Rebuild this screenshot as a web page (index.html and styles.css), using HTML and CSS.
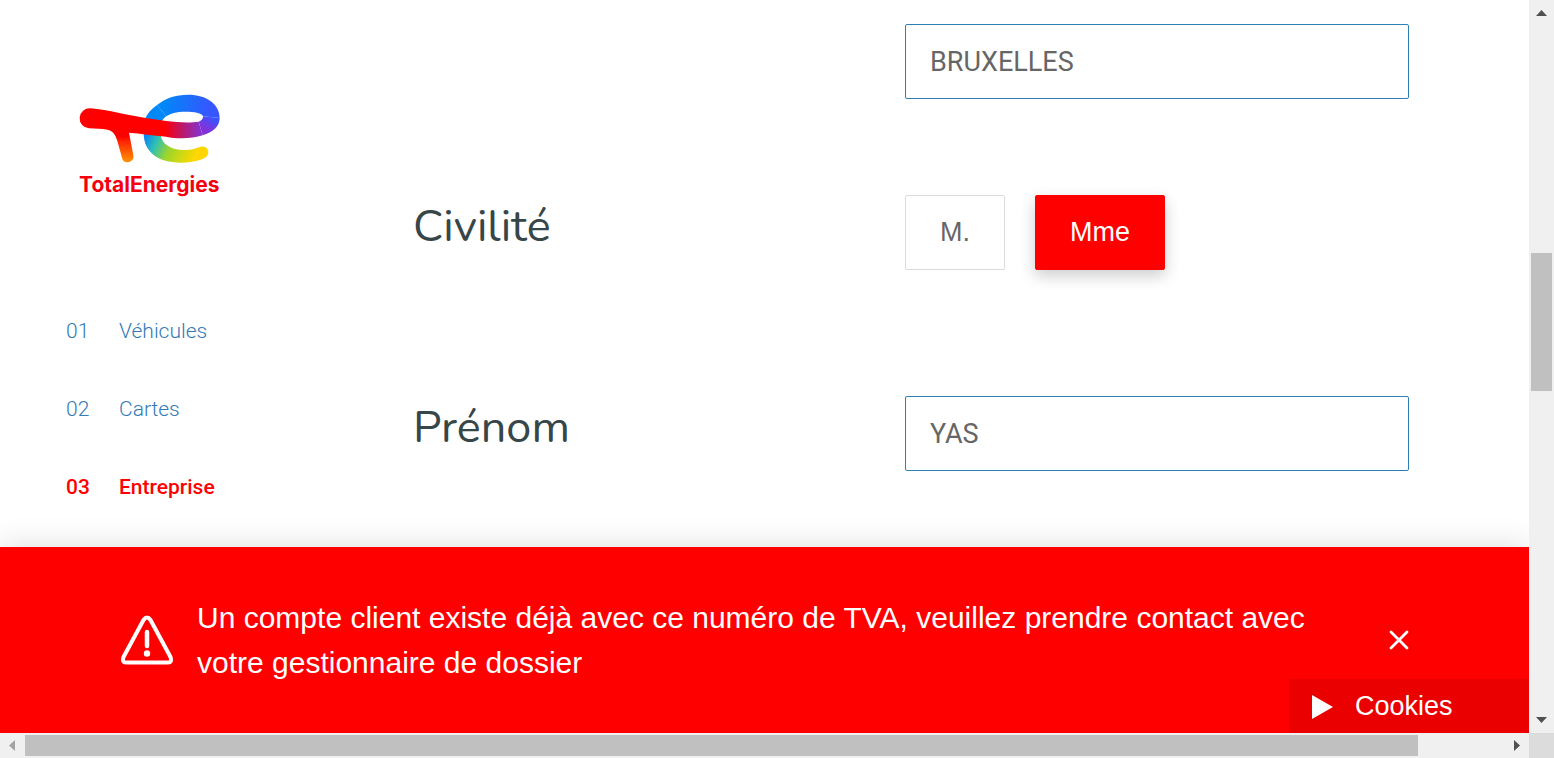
FILE: index.html
```html
<!DOCTYPE html>
<html lang="fr">
<head>
<meta charset="utf-8">
<title>TotalEnergies - Entreprise</title>
<link rel="stylesheet" href="styles.css">
</head>
<body>
<div class="shell">
  <div class="page">
    <div class="content">
      <aside class="sidebar">
        <a class="brand" href="#">
          <svg class="brand-mark" viewBox="60 40 422 210" aria-hidden="true">
            <defs>
              <linearGradient id="t" gradientUnits="userSpaceOnUse" x1="185" y1="168" x2="185" y2="240"><stop offset="0" stop-color="#ff0000"/><stop offset=".15" stop-color="#ff1e00"/><stop offset="1" stop-color="#ff8c00"/></linearGradient>
              <linearGradient id="bar" gradientUnits="userSpaceOnUse" x1="320" y1="0" x2="425" y2="0"><stop offset="0" stop-color="#f5000f"/><stop offset=".5" stop-color="#b81b72"/><stop offset="1" stop-color="#8333d2"/></linearGradient>
              <linearGradient id="side" gradientUnits="userSpaceOnUse" x1="460" y1="110" x2="430" y2="160"><stop offset="0" stop-color="#3656ff"/><stop offset=".6" stop-color="#7a36df"/><stop offset="1" stop-color="#8630d0"/></linearGradient>
              <linearGradient id="top" gradientUnits="userSpaceOnUse" x1="310" y1="70" x2="450" y2="90"><stop offset="0" stop-color="#0088f8"/><stop offset="1" stop-color="#3656ff"/></linearGradient>
              <linearGradient id="low" gradientUnits="userSpaceOnUse" x1="258" y1="165" x2="405" y2="232"><stop offset="0" stop-color="#0a86f0"/><stop offset=".23" stop-color="#2fc0b5"/><stop offset=".5" stop-color="#9bd52b"/><stop offset=".75" stop-color="#cfd914"/><stop offset="1" stop-color="#ffd600"/></linearGradient>
            </defs>
            <path fill="url(#low)" d="M252 158L303 164C307 192 336 208 372 208C396 208 409 202 424 198C435 195 446 203 446 214C446 224 440 230 431 234C410 242 387 246 362 246C298 246 252 216 252 158Z"/>
            <path fill="#0088f8" d="M257 113C264 97 276 84 292 73L320 107C312 112 309 117 306 123Z"/>
            <path fill="url(#top)" d="M292 73C318 52 347 42 386 42C440 42 480 70 480 112L430 107C428 97 402 93 378 93C350 93 331 99 320 107Z"/>
            <path fill="url(#side)" d="M430 107L480 112C480 138 459 155 429 164L417 123C425 120 431 115 430 107Z"/>
            <path fill="url(#bar)" d="M319 121C354 125 390 127 417 123L429 164C398 174 355 175 319 168Z"/>
            <path fill="url(#t)" d="M92 83C148 88 204 104 258 112L320 121V168C280 164 242 159 208 156L221 224C224 236 214 245 203 245C194 245 189 240 187 231L173 181C167 160 159 151 143 147C125 143 108 145 88 143A30 30 0 0 1 92 83Z"/>
          </svg>
          <span class="brand-name">TotalEnergies</span>
        </a>
        <nav class="steps" aria-label="Étapes">
          <a class="step" href="#"><span class="step-number">01</span><span>Véhicules</span></a>
          <a class="step" href="#"><span class="step-number">02</span><span>Cartes</span></a>
          <a class="step step-current" href="#" aria-current="step"><span class="step-number">03</span><span>Entreprise</span></a>
        </nav>
      </aside>
      <form class="form">
        <div class="row">
          <span class="label"></span>
          <input class="field" type="text" aria-label="Ville" value="BRUXELLES">
        </div>
        <div class="row" role="group" aria-labelledby="civility">
          <span class="label" id="civility">Civilité</span>
          <div class="choices">
            <button class="choice" type="button" aria-pressed="false">M.</button>
            <button class="choice choice-on" type="button" aria-pressed="true">Mme</button>
          </div>
        </div>
        <div class="row row-spaced">
          <label class="label" for="firstname">Prénom</label>
          <input class="field" id="firstname" type="text" value="YAS">
        </div>
      </form>
    </div>
    <div class="alert" role="alert">
      <svg class="alert-icon" viewBox="0 0 54 50" aria-hidden="true">
        <path d="M23.500 5Q27 0 30.500 5L50.500 42Q52.500 47.500 48 47.500H6Q1.500 47.500 3.500 42Z" fill="none" stroke="#fff" stroke-width="4" stroke-linejoin="round"/>
        <path d="M27 17V31" stroke="#fff" stroke-width="4.500" stroke-linecap="round"/>
        <circle cx="27" cy="38.500" r="3.200" fill="#fff"/>
      </svg>
      <p class="alert-text">Un compte client existe déjà avec ce numéro de TVA, veuillez prendre contact avec votre gestionnaire de dossier</p>
      <button class="close" type="button" aria-label="Fermer">
        <svg class="close-icon" viewBox="0 0 20 20" aria-hidden="true"><path d="M2 2L18 18M18 2L2 18" stroke="#fff" stroke-width="2.800" stroke-linecap="round"/></svg>
      </button>
      <button class="cookies" type="button">
        <svg class="cookies-icon" viewBox="0 0 21 26" aria-hidden="true"><path d="M0 2L21 14L0 26Z" fill="#fff"/></svg>
        <span>Cookies</span>
      </button>
    </div>
  </div>
  <div class="scroll scroll-y" aria-hidden="true">
    <svg class="arrow" viewBox="0 0 25 25"><path d="M7 16L12.500 10L18 16Z" fill="#505050"/></svg>
    <div class="track"><div class="gap-y-before"></div><div class="thumb-y"></div><div class="gap-y-after"></div></div>
    <svg class="arrow" viewBox="0 0 25 25"><path d="M7 9L12.500 15L18 9Z" fill="#505050"/></svg>
  </div>
  <div class="scroll scroll-x" aria-hidden="true">
    <svg class="arrow" viewBox="0 0 25 25"><path d="M15 7L9 12.500L15 18Z" fill="#a3a3a3"/></svg>
    <div class="track"><div class="thumb-x"></div><div class="gap-x-after"></div></div>
    <svg class="arrow" viewBox="0 0 25 25"><path d="M10 7L16 12.500L10 18Z" fill="#505050"/></svg>
  </div>
  <div class="corner"></div>
</div>
</body>
</html>
```
FILE: styles.css
```css
* { box-sizing: border-box; }

body {
  margin: 0;
  background: #fff;
  font-family: "Liberation Sans", Arial, sans-serif;
}

.shell {
  display: grid;
  grid-template: minmax(0, 1fr) 25px / minmax(0, 1fr) 25px;
  height: 100vh;
  overflow: hidden;
}

.page {
  display: flex;
  flex-direction: column;
  overflow: hidden;
}

.content {
  display: flex;
  flex: 1;
  min-height: 0;
  overflow: hidden;
}

.sidebar {
  flex: 0 0 413px;
  padding: 94px 66px 0;
}

.brand {
  display: block;
  width: 142px;
  margin-left: 13px;
  color: #f5000f;
  text-decoration: none;
}

.brand-mark {
  display: block;
  width: 142px;
  height: 70px;
}

.brand-name {
  display: block;
  margin-top: 7px;
  font: 700 21px/28px Inter, sans-serif;
}

.steps { margin-top: 93px; }

.step {
  display: flex;
  color: #337ab7;
  font: 300 21px/78px Roboto, sans-serif;
  text-decoration: none;
}

.step-number { flex: 0 0 53px; }

.step-current {
  color: #f00;
  font-weight: 500;
}

.form {
  display: flex;
  flex: 1;
  flex-direction: column;
  gap: 96px;
  padding: 24px 120px 0 0;
}

.row {
  display: flex;
  align-items: flex-start;
}

.row-spaced { margin-top: 30px; }

.label {
  flex: 0 0 492px;
  color: #374649;
  font: 400 45px/64px Nunito, Lato, sans-serif;
}

.field {
  flex: 1;
  min-width: 0;
  height: 75px;
  padding: 0 24px;
  border: 1px solid #2e7fb8;
  border-radius: 2px;
  background: #fff;
  color: #666;
  font: 400 27px Roboto, sans-serif;
}

.choices {
  display: flex;
  gap: 30px;
}

.choice {
  height: 75px;
  padding: 0 34px 1px;
  border: 1px solid #dcdcdc;
  border-radius: 2px;
  background: #fff;
  color: #666;
  font: 400 27px "Liberation Sans", Arial, sans-serif;
}

.choice-on {
  border-color: #f00;
  background: #f00;
  box-shadow: 0 6px 16px rgba(0, 0, 0, .2);
  color: #fff;
}

.alert {
  position: relative;
  display: flex;
  align-items: center;
  padding: 48px 120px;
  background: #f00;
  box-shadow: 0 0 30px rgba(0, 0, 0, .14);
  color: #fff;
}

.alert-icon {
  flex: none;
  width: 54px;
  height: 50px;
}

.alert-text {
  flex: 1;
  margin: 0 64px 0 23px;
  font-size: 30px;
  line-height: 45px;
}

.close {
  display: flex;
  padding: 0;
  border: 0;
  background: none;
}

.close-icon {
  width: 20px;
  height: 20px;
}

.cookies {
  position: absolute;
  right: 0;
  bottom: 0;
  display: flex;
  align-items: center;
  gap: 22px;
  width: 240px;
  height: 54px;
  padding: 0 23px;
  border: 0;
  background: #eb0000;
  color: #fff;
  font: 400 27px "Liberation Sans", Arial, sans-serif;
}

.cookies-icon {
  width: 21px;
  height: 26px;
}

.scroll {
  display: flex;
  background: #f0f0f0;
}

.scroll-y { flex-direction: column; }

.arrow {
  flex: none;
  width: 25px;
  height: 25px;
}

.track {
  display: flex;
  flex: 1;
  flex-direction: inherit;
  padding: 0 2px;
}

.scroll-x .track { padding: 2px 0; }

.thumb-x,
.thumb-y { background: #c0c0c0; }

.gap-y-before { flex: 228; }
.thumb-y { flex: 138; }
.gap-y-after { flex: 317; }
.thumb-x { flex: 1393; }
.gap-x-after { flex: 86; }

.corner { background: #dcdcdc; }
```
